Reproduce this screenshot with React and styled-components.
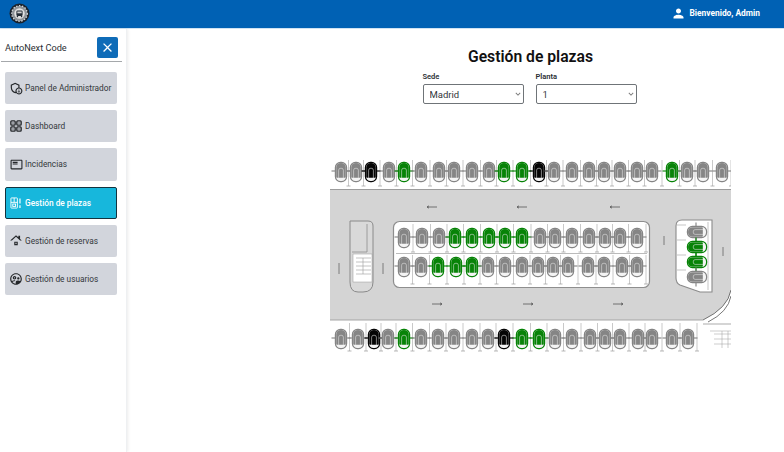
import React from 'react'
import styled, { createGlobalStyle } from 'styled-components'
import {
  MdOutlineAdminPanelSettings,
  MdOutlineFeaturedPlayList,
  MdOutlineRoofing,
  MdOutlineSupervisedUserCircle,
  MdPerson,
  MdClose,
  MdKeyboardArrowDown,
} from 'react-icons/md'

const GlobalStyle = createGlobalStyle`
  html, body { margin: 0; padding: 0; background: #fff; }
  body { font-family: Roboto, "Noto Sans", sans-serif; color: #212529; }
  * { box-sizing: border-box; }
`

const Logo = () => (
  <svg width="21" height="21" viewBox="0 0 21 21">
    <circle cx="10.5" cy="10.5" r="10" fill="#1a222c" />
    <circle cx="10.5" cy="10.5" r="7.8" fill="#8f9499" />
    <circle cx="10.5" cy="10.5" r="7.8" fill="none" stroke="#d9dbdd" strokeWidth="1.2" strokeDasharray="1.4 1.6" />
    <circle cx="10.5" cy="10.5" r="5.2" fill="#e3e3e3" />
    <rect x="7.4" y="7.6" width="6.2" height="5.4" rx="1.2" fill="#232b35" />
    <rect x="8.3" y="8.5" width="4.4" height="1.8" fill="#cfcfcf" />
    <rect x="7.8" y="13" width="1.3" height="1.2" fill="#232b35" />
    <rect x="11.9" y="13" width="1.3" height="1.2" fill="#232b35" />
  </svg>
)

const DashIcon = () => (
  <svg width="12" height="12" viewBox="0 0 14 14" fill="none" stroke="currentColor" strokeWidth="1.6">
    <rect x="1" y="1" width="5" height="5" rx="1" />
    <rect x="8" y="1" width="5" height="5" rx="1" />
    <rect x="1" y="8" width="5" height="5" rx="1" />
    <rect x="8" y="8" width="5" height="5" rx="1" />
    <path d="M2.8 3.5h1.4M9.8 3.5h1.4M2.8 10.5h1.4M9.8 10.5h1.4" strokeWidth="1.2" />
  </svg>
)

const PlazasIcon = () => (
  <svg width="12" height="12" viewBox="0 0 13 13" fill="none" stroke="currentColor" strokeWidth="1">
    <rect x="1" y="1" width="7" height="11" rx="0.6" />
    <path d="M1 5.8h7M4.5 1v4.8" />
    <rect x="3" y="7.6" width="3" height="2.6" />
    <path d="M10.8 1.5v5.6M10.8 9v3" strokeWidth="1.3" />
  </svg>
)

const MENU = [
  { label: 'Panel de Administrador', icon: <MdOutlineAdminPanelSettings size={14} /> },
  { label: 'Dashboard', icon: <DashIcon /> },
  { label: 'Incidencias', icon: <MdOutlineFeaturedPlayList size={13} /> },
  { label: 'Gestión de plazas', icon: <PlazasIcon />, active: true },
  { label: 'Gestión de reservas', icon: <MdOutlineRoofing size={15} /> },
  { label: 'Gestión de usuarios', icon: <MdOutlineSupervisedUserCircle size={14} /> },
]

const COLORS = { g: '#858585', v: '#078307', b: '#050505' }

// x de cada coche en el plano, y su estado
const TOP_ROW = [[11,'g'],[26,'g'],[41,'b'],[59,'g'],[74,'v'],[91,'g'],[109,'g'],[124,'g'],[142,'g'],[159,'g'],[174,'v'],[192,'v'],[209,'b'],[224,'g'],[242,'g'],[259,'g'],[274,'g'],[290,'g'],[307,'g'],[322,'g'],[342,'v'],[357,'g'],[373,'g'],[392,'g']]
const MID_ROW_A = [[74,'g'],[92,'g'],[109,'g'],[125,'v'],[142,'v'],[159,'v'],[175,'v'],[192,'v'],[210,'g'],[225,'g'],[242,'g'],[259,'g'],[275,'g'],[290,'g'],[307,'g']]
const MID_ROW_B = [[74,'g'],[91,'g'],[108,'v'],[126,'v'],[142,'v'],[158,'g'],[175,'g'],[192,'g'],[208,'g'],[223,'g'],[238,'g'],[258,'g'],[274,'g'],[292,'g'],[307,'g']]
const BOTTOM_ROW = [[11,'g'],[28,'g'],[44,'b'],[58,'g'],[74,'v'],[91,'g'],[108,'g'],[124,'g'],[142,'g'],[158,'g'],[174,'b'],[192,'v'],[209,'v'],[225,'g'],[242,'g'],[260,'g'],[275,'g'],[290,'g'],[308,'g'],[322,'g'],[342,'g'],[358,'g']]
const SIDE_ROW = [[76,'g'],[91,'v'],[106,'v'],[121,'g']]

const Car = ({ x, y, state, turned }) => {
  const c = COLORS[state]
  return (
    <g transform={`translate(${x} ${y})${turned ? ' rotate(-90)' : ''}`}>
      <path d="M-9.5 -1H9.5" stroke={c} strokeWidth="1.4" opacity="0.8" />
      <rect x="-5.6" y="-9.6" width="11.2" height="19.2" rx="5" fill="#f4f4f4" stroke={c} strokeWidth="1.2" />
      <path d="M-4.8 -4.5Q-4.8 -9 0 -9Q4.8 -9 4.8 -4.5V5Q4.8 5.8 4 5.8H-4Q-4.8 5.8 -4.8 5Z" fill={c} />
      <path d="M-2.4 6V-1.8Q-2.4 -3.8 0 -3.8Q2.4 -3.8 2.4 -1.8V6" fill="none" stroke="#e6e6e6" strokeWidth="0.8" opacity="0.7" />
    </g>
  )
}

const Row = ({ cars, y, top, bottom }) => (
  <g>
    {cars.map(([x, state], i) => {
      const next = cars[i + 1]
      const sep = next ? (x + next[0]) / 2 : x + 9
      return (
        <g key={x}>
          <path d={`M${sep} ${top}V${bottom}`} stroke="#777" strokeWidth="0.4" />
          <path d={`M${sep - 2} ${bottom}h4`} stroke="#999" strokeWidth="0.7" />
          <Car x={x} y={y} state={state} />
        </g>
      )
    })}
  </g>
)

const Arrow = ({ x, y, left }) => (
  <path
    d={left ? `M${x - 5} ${y}h10M${x - 5} ${y}l2 -1.2M${x - 5} ${y}l2 1.2` : `M${x - 5} ${y}h10M${x + 5} ${y}l-2 -1.2M${x + 5} ${y}l-2 1.2`}
    stroke="#555"
    strokeWidth="0.8"
    fill="none"
  />
)

const ParkingMap = () => (
  <MapSvg viewBox="0 0 401 196" width="401" height="196">
    <rect width="401" height="196" fill="#fff" />
    {/* calzada */}
    <path d="M0 34H401V134Q398 152 373 164H0Z" fill="#d4d4d4" />
    <path d="M0 33.5H401" stroke="#9c9c9c" strokeWidth="1" />
    <path d="M0 164H373" stroke="#a5a5a5" strokeWidth="1" />
    <path d="M401 134Q398 152 373 164M401 140Q398 156 378 166" stroke="#555" strokeWidth="0.8" fill="none" />

    {/* isla izquierda */}
    <path d="M20 65H38Q43 65 43 70V126Q43 136 33 136H28Q20 136 20 126Z" fill="#d9d9d9" stroke="#8a8a8a" />
    <path d="M22 96H37V68" stroke="#8e8e8e" strokeWidth="0.8" fill="none" />
    <rect x="23" y="98" width="19" height="28" fill="#fff" stroke="#999" strokeWidth="0.5" />
    <path d="M26 102H41M26 106H41M26 110H41M26 114H41M26 118H41M33 102V118" stroke="#9a9a9a" strokeWidth="0.6" />
    <path d="M9 107v11M53 107v11" stroke="#666" strokeWidth="0.8" />

    {/* isla central */}
    <rect x="63.5" y="65.5" width="256" height="66" rx="6" fill="#fff" stroke="#8e8e8e" strokeWidth="1.2" />
    <path d="M66 97.5H317" stroke="#777" strokeWidth="0.5" />
    <Row cars={MID_ROW_A} y={82} top={68} bottom={96} />
    <Row cars={MID_ROW_B} y={111} top={99} bottom={128} />

    {/* isla derecha */}
    <path d="M352 64H382V136H370L350 129Q346 127 346 122V70Q346 64 352 64Z" fill="#fff" stroke="#8a8a8a" strokeWidth="1.1" />
    <path d="M347 69H356M347 84H356M347 99H356M347 114H356M378 66V134" stroke="#888" strokeWidth="0.5" />
    <path d="M393 91v9M334 80v9" stroke="#666" strokeWidth="0.8" />
    {SIDE_ROW.map(([y, state]) => (
      <Car key={y} x={367} y={y} state={state} turned />
    ))}

    <Arrow x={102} y={51} left />
    <Arrow x={192} y={51} left />
    <Arrow x={285} y={51} left />
    <Arrow x={107} y={148} />
    <Arrow x={198} y={148} />
    <Arrow x={288} y={148} />

    <Row cars={TOP_ROW} y={16} top={4} bottom={30} />
    <Row cars={BOTTOM_ROW} y={183} top={167} bottom={195} />

    {/* cajetín del plano */}
    <path d="M380 175H401M384 178H401M384 183H401M384 188H401M392 175V192M398 175V192" stroke="#999" strokeWidth="0.5" fill="none" />
    <path d="M373 168H401" stroke="#888" strokeWidth="0.7" />
  </MapSvg>
)

const App = () => (
  <>
    <GlobalStyle />
    <Page>
      <Header>
        <Logo />
        <Welcome>
          <MdPerson size={15} />
          Bienvenido, Admin
        </Welcome>
      </Header>
      <Body>
        <Sidebar>
          <SidebarHead>
            <Brand>AutoNext Code</Brand>
            <CloseButton aria-label="Cerrar">
              <MdClose size={15} />
            </CloseButton>
          </SidebarHead>
          <Menu>
            {MENU.map(item => (
              <MenuItem key={item.label} $active={item.active}>
                <IconSlot $active={item.active}>{item.icon}</IconSlot>
                {item.label}
              </MenuItem>
            ))}
          </Menu>
        </Sidebar>
        <Main>
          <Title>Gestión de plazas</Title>
          <Filters>
            <Field>
              <FieldLabel>Sede</FieldLabel>
              <SelectWrap>
                <Select defaultValue="Madrid">
                  <option>Madrid</option>
                </Select>
                <Chevron><MdKeyboardArrowDown size={10} /></Chevron>
              </SelectWrap>
            </Field>
            <Field>
              <FieldLabel>Planta</FieldLabel>
              <SelectWrap>
                <Select defaultValue="1">
                  <option>1</option>
                </Select>
                <Chevron><MdKeyboardArrowDown size={10} /></Chevron>
              </SelectWrap>
            </Field>
          </Filters>
          <ParkingMap />
        </Main>
      </Body>
    </Page>
  </>
)

export default App

const Page = styled.div`
  width: 784px;
  height: 452px;
  overflow: hidden;
  display: flex;
  flex-direction: column;
`

const Header = styled.header`
  height: 29px;
  flex: none;
  background: #0061b4;
  border-bottom: 1px solid #cfe3f3;
  display: flex;
  align-items: center;
  justify-content: space-between;
  padding: 0 24px 2px 9px;
`

const Welcome = styled.div`
  display: flex;
  align-items: center;
  gap: 4px;
  color: #fff;
  font-size: 8.4px;
  font-weight: 700;
`

const Body = styled.div`
  flex: 1;
  display: flex;
`

const Sidebar = styled.aside`
  width: 127px;
  flex: none;
  padding: 8px 9px 0 5px;
  border-right: 1px solid #eef0f2;
  box-shadow: 1px 0 3px rgba(0, 0, 0, 0.08);
`

const SidebarHead = styled.div`
  height: 25px;
  margin: 0 -5px 0 -4px;
  padding: 0 4px 3px 4px;
  display: flex;
  align-items: center;
  justify-content: space-between;
  border-bottom: 1px solid #a5a8ab;
`

const Brand = styled.span`
  font-size: 9.2px;
  color: #2b2f33;
`

const CloseButton = styled.button`
  width: 21px;
  height: 21px;
  padding: 0;
  border: none;
  border-radius: 2px;
  background: #0f6cb8;
  color: #fff;
  display: flex;
  align-items: center;
  justify-content: center;
`

const Menu = styled.nav`
  margin-top: 10px;
  display: flex;
  flex-direction: column;
  gap: 6px;
`

const MenuItem = styled.div`
  height: 32.2px;
  display: flex;
  align-items: center;
  gap: 2px;
  padding-left: 3px;
  white-space: nowrap;
  border-radius: 2px;
  font-size: 8.3px;
  background: ${({ $active }) => ($active ? '#17b7dc' : '#d2d5dc')};
  color: ${({ $active }) => ($active ? '#fff' : '#33373b')};
  font-weight: ${({ $active }) => ($active ? 500 : 400)};
  border: ${({ $active }) => ($active ? '1px solid #12333f' : 'none')};
`

const IconSlot = styled.span`
  width: 14px;
  margin-left: ${({ $active }) => ($active ? '0' : '1px')};
  height: 16px;
  display: flex;
  align-items: center;
  justify-content: center;
  color: ${({ $active }) => ($active ? '#fff' : '#24272a')};
`

const Main = styled.main`
  flex: 1;
  display: flex;
  flex-direction: column;
  align-items: center;
  padding: 16px 0 0 150px;
`

const Title = styled.h1`
  margin: 0;
  font-size: 15.7px;
  line-height: 23px;
  font-weight: 600;
  color: #111;
`

const Filters = styled.div`
  margin-left: -2px;
  margin-top: 4px;
  display: flex;
  gap: 12px;
`

const Field = styled.div`
  width: 101px;
`

const FieldLabel = styled.div`
  font-size: 7.5px;
  line-height: 10px;
  font-weight: 600;
  color: #2b2f33;
  margin-bottom: 2px;
`

const SelectWrap = styled.div`
  position: relative;
`

const Select = styled.select`
  display: block;
  appearance: none;
  width: 100%;
  height: 20px;
  padding: 0 6px;
  border: 1px solid #6f7478;
  border-radius: 2px;
  background: #fff;
  font-family: inherit;
  font-size: 9.5px;
  color: #33373b;
`

const Chevron = styled.span`
  position: absolute;
  right: 1px;
  top: 5px;
  display: flex;
  color: #777;
`

const MapSvg = styled.svg`
  display: block;
  margin-top: 52px;
`
